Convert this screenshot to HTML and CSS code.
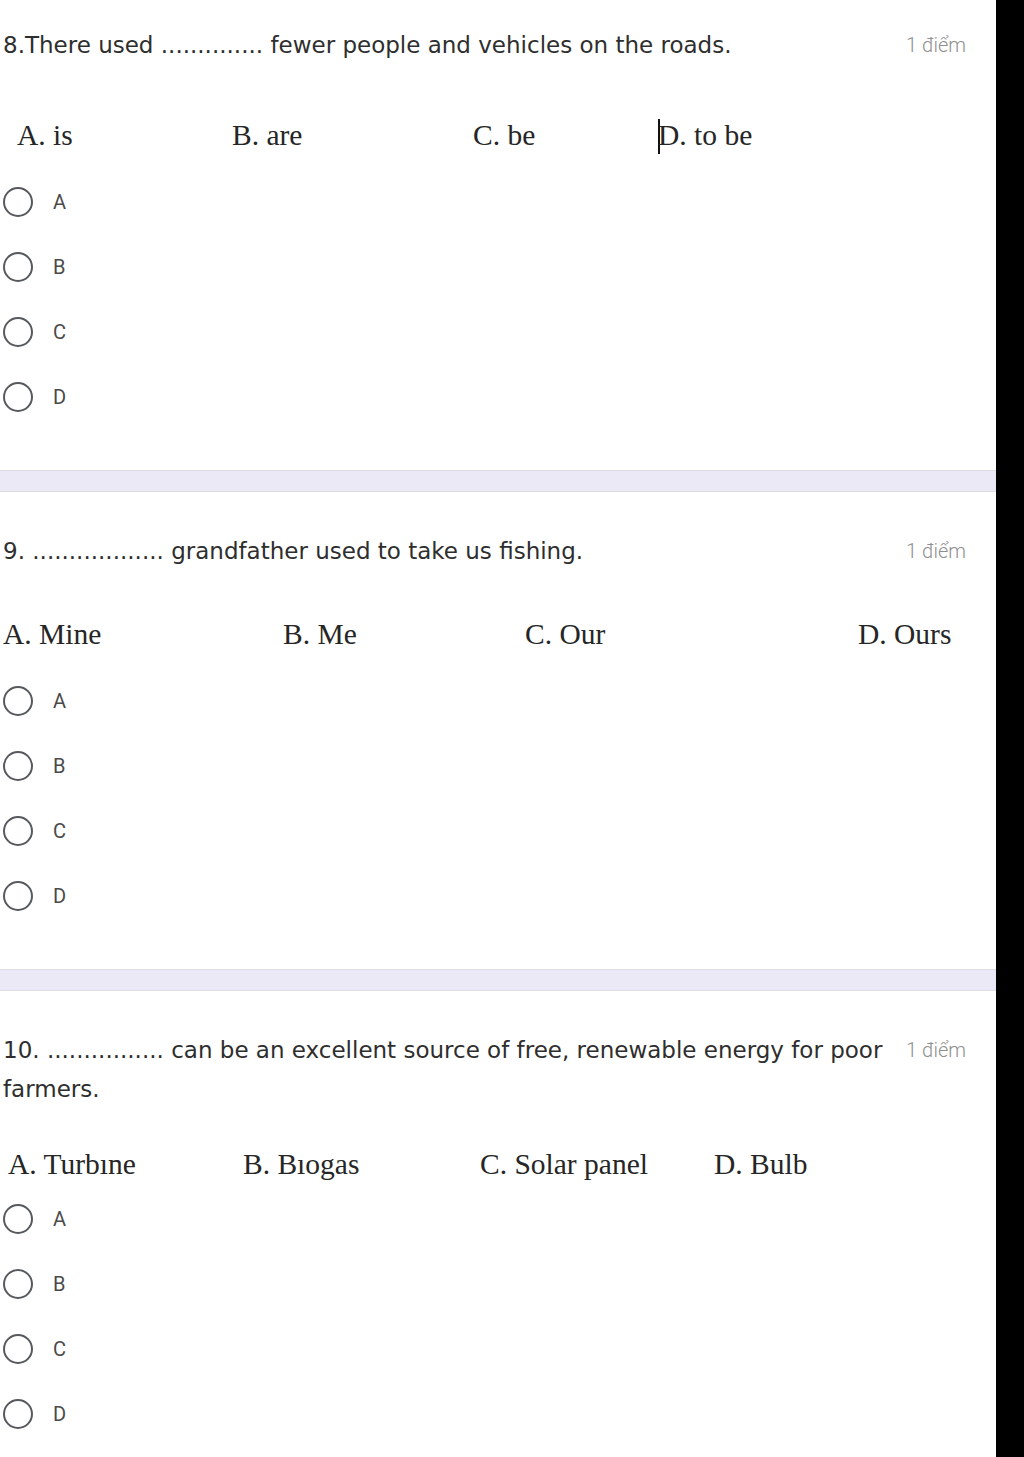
FILE: index.html
```html
<!DOCTYPE html>
<html>
<head>
<meta charset="utf-8">
<link rel="stylesheet" href="styles.css">
</head>
<body>
<div class="page">
  <main class="form">
    <section class="q q1">
      <div class="q-head">
        <div class="q-text">8.There used .............. fewer people and vehicles on the roads.</div>
        <div class="q-points">1 điểm</div>
      </div>
      <div class="opts opts1">
        <span>A. is</span><span>B. are</span><span>C. be</span><span><i class="caret"></i>D. to be</span>
      </div>
      <div class="radios">
        <label class="radio"><span class="circle"></span><span class="lbl">A</span></label>
        <label class="radio"><span class="circle"></span><span class="lbl">B</span></label>
        <label class="radio"><span class="circle"></span><span class="lbl">C</span></label>
        <label class="radio"><span class="circle"></span><span class="lbl">D</span></label>
      </div>
    </section>
    <div class="band"></div>
    <section class="q q2">
      <div class="q-head">
        <div class="q-text">9. .................. grandfather used to take us fishing.</div>
        <div class="q-points">1 điểm</div>
      </div>
      <div class="opts opts2">
        <span>A. Mine</span><span>B. Me</span><span>C. Our</span><span>D. Ours</span>
      </div>
      <div class="radios">
        <label class="radio"><span class="circle"></span><span class="lbl">A</span></label>
        <label class="radio"><span class="circle"></span><span class="lbl">B</span></label>
        <label class="radio"><span class="circle"></span><span class="lbl">C</span></label>
        <label class="radio"><span class="circle"></span><span class="lbl">D</span></label>
      </div>
    </section>
    <div class="band"></div>
    <section class="q q3">
      <div class="q-head">
        <div class="q-text">10. ................ can be an excellent source of free, renewable energy for poor<br>farmers.</div>
        <div class="q-points">1 điểm</div>
      </div>
      <div class="opts opts3">
        <span>A. Turbıne</span><span>B. Bıogas</span><span>C. Solar panel</span><span>D. Bulb</span>
      </div>
      <div class="radios">
        <label class="radio"><span class="circle"></span><span class="lbl">A</span></label>
        <label class="radio"><span class="circle"></span><span class="lbl">B</span></label>
        <label class="radio"><span class="circle"></span><span class="lbl">C</span></label>
        <label class="radio"><span class="circle"></span><span class="lbl">D</span></label>
      </div>
    </section>
  </main>
  <aside class="edge"></aside>
</div>
</body>
</html>
```
FILE: styles.css
```css
html, body {
  margin: 0;
  padding: 0;
  background: #ffffff;
}
.page {
  display: flex;
  width: 1024px;
  height: 1457px;
  overflow: hidden;
}
.form {
  width: 996px;
  flex: none;
}
.edge {
  flex: 1;
  background: #000000;
}
.q-head {
  display: flex;
  align-items: flex-start;
  justify-content: space-between;
  gap: 10px;
  padding: 0 30px 0 3px;
}
.q-text {
  font-family: "DejaVu Sans", sans-serif;
  font-size: 23px;
  line-height: 39px;
  color: #2e2e2e;
  white-space: nowrap;
}
.q-points {
  font-family: Roboto, sans-serif;
  font-weight: 300;
  font-size: 20px;
  line-height: 39px;
  color: #8f8f8f;
  white-space: nowrap;
}
.opts {
  display: grid;
  font-family: "Liberation Serif", serif;
  font-size: 29.5px;
  line-height: 40px;
  color: #262626;
}
.opts span { white-space: nowrap; }
.caret {
  display: inline-block;
  width: 2px;
  height: 35px;
  background: #111;
  vertical-align: -9px;
  margin-right: -2px;
}
.opts1 {
  grid-template-columns: 215px 241px 185px auto;
  padding-left: 17px;
  margin-top: 50px;
}
.opts2 {
  grid-template-columns: 280px 242px 333px auto;
  padding-left: 3px;
  margin-top: 43px;
}
.opts3 {
  grid-template-columns: 235px 237px 234px auto;
  padding-left: 8px;
  margin-top: 35px;
}
.radios {
  display: flex;
  flex-direction: column;
}
.radio {
  display: flex;
  align-items: center;
  height: 65px;
  padding-left: 3px;
}
.circle {
  width: 26px;
  height: 26px;
  border: 2.8px solid #56595d;
  border-radius: 50%;
  flex: none;
}
.lbl {
  margin-left: 20px;
  font-family: Roboto, sans-serif;
  font-size: 20px;
  color: #4a4a4a;
}
.q1 { padding-top: 26px; }
.q1 .radios { margin-top: 14px; margin-bottom: 41px; }
.q2 { padding-top: 40px; }
.q2 .radios { margin-top: 14px; margin-bottom: 41px; }
.q3 { padding-top: 40px; }
.q3 .radios { margin-top: 2px; }
.band {
  height: 20px;
  background: #ece9f6;
  border-top: 1px solid #dddce2;
  border-bottom: 1px solid #dddce2;
}
```
